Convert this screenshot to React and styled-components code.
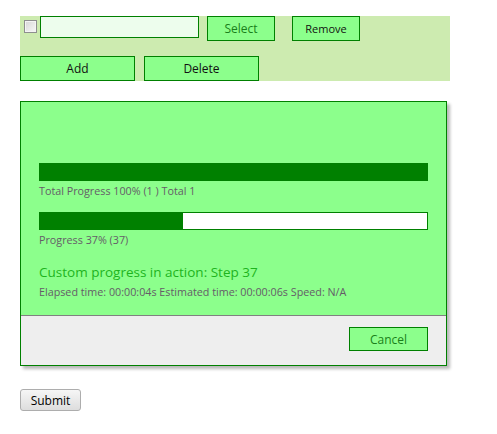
import React from 'react';
import styled, { createGlobalStyle } from 'styled-components';

const GlobalStyle = createGlobalStyle`
  body {
    margin: 0;
    background: #ffffff;
    font-family: "Open Sans", "Noto Sans", sans-serif;
  }
`;

const Page = styled.div`
  padding: 16px 0 0 20px;
`;

const Toolbar = styled.div`
  width: 430px;
  height: 65px;
  background: #cdebb0;
  display: flex;
  flex-direction: column;
  gap: 15px;
`;

const Row = styled.div`
  display: flex;
  align-items: flex-start;
`;

const Check = styled.input.attrs({ type: 'checkbox' })`
  appearance: none;
  margin: 4px 3px 0 4px;
  width: 13px;
  height: 13px;
  border: 1px solid #8e8f8f;
  background: linear-gradient(135deg, #d6d6d6, #f8f8f8);
  box-shadow: inset 0 0 0 1px #f4f4f4;
`;

const TextInput = styled.input`
  box-sizing: border-box;
  width: 159px;
  height: 22px;
  border: 1px solid #008000;
  background: #edfded;
  margin: 0 8px 0 0;
  padding: 0 3px;
`;

const GreenButton = styled.button`
  box-sizing: border-box;
  width: ${p => p.$w}px;
  height: ${p => p.$h || 25}px;
  margin-right: ${p => p.$mr || 0}px;
  background: #8cff8c;
  border: 1px solid #008000;
  color: ${p => (p.$green ? '#1a7f1a' : '#111')};
  font-family: "Open Sans", "Noto Sans", sans-serif;
  font-size: ${p => p.$fs || 12}px;
  padding: 0;
  cursor: pointer;
`;

const Dialog = styled.div`
  margin-top: 20px;
  width: 427px;
  box-sizing: border-box;
  border: 1px solid #008000;
  background: #8cff8c;
  box-shadow: 3px 3px 3px rgba(0, 0, 0, 0.28);
`;

const Body = styled.div`
  padding: 61px 18px 0 18px;
  height: 213px;
  box-sizing: border-box;
`;

const Bar = styled.div`
  box-sizing: border-box;
  height: 18px;
  background: #ffffff;
  border: 1px solid #008000;
  overflow: hidden;
`;

const Fill = styled.div`
  height: 100%;
  background: #008000;
`;

const Label = styled.div`
  color: #655c68;
  font-size: 10.75px;
  line-height: 16px;
  margin: 2px 0 ${p => p.$mb || 0}px;
`;

const Step = styled.div`
  color: #1db41d;
  font-size: 13.5px;
  line-height: 20px;
  margin-top: 14px;
`;

const Footer = styled.div`
  height: 50px;
  background: #eeeeee;
  border-top: 1px solid #808080;
  display: flex;
  justify-content: flex-end;
  align-items: flex-start;
  padding: 11px 18px 0 0;
  box-sizing: border-box;
`;

const Submit = styled.button`
  margin-top: 23px;
  width: 61px;
  height: 22px;
  border: 1px solid #adadad;
  border-radius: 3px;
  background: linear-gradient(#f6f6f6, #dddddd);
  font-family: "Open Sans", "Noto Sans", sans-serif;
  font-size: 12px;
  color: #000;
  padding: 0;
`;

const ProgressBar = ({ pct }) => (
  <Bar>
    <Fill style={{ width: `${pct}%` }} />
  </Bar>
);

export default function App() {
  return (
    <Page>
      <GlobalStyle />
      <Toolbar>
        <Row>
          <Check />
          <TextInput />
          <GreenButton $w={68} $mr={17} $green>Select</GreenButton>
          <GreenButton $w={68} $fs={11}>Remove</GreenButton>
        </Row>
        <Row>
          <GreenButton $w={115} $mr={9}>Add</GreenButton>
          <GreenButton $w={115}>Delete</GreenButton>
        </Row>
      </Toolbar>
      <Dialog>
        <Body>
          <ProgressBar pct={100} />
          <Label $mb={13}>Total Progress 100% (1 ) Total 1</Label>
          <ProgressBar pct={37} />
          <Label>Progress 37% (37)</Label>
          <Step>Custom progress in action: Step 37</Step>
          <Label>Elapsed time: 00:00:04s Estimated time: 00:00:06s Speed: N/A</Label>
        </Body>
        <Footer>
          <GreenButton $w={79} $h={24} $green>Cancel</GreenButton>
        </Footer>
      </Dialog>
      <Submit>Submit</Submit>
    </Page>
  );
}
